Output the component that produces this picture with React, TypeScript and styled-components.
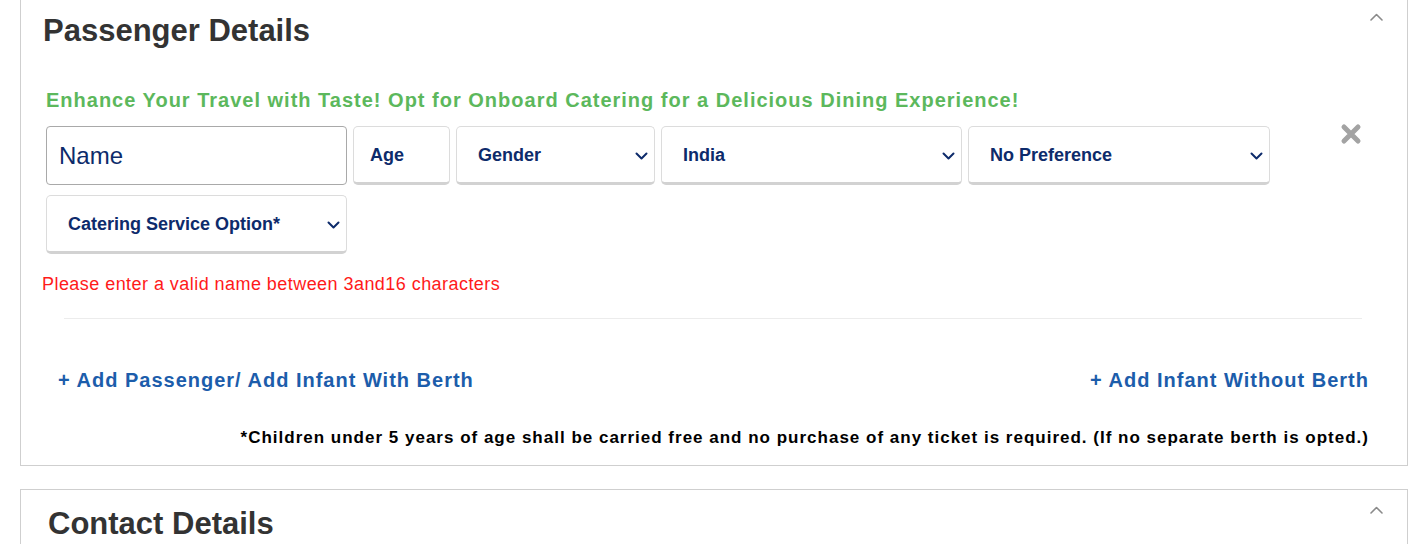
import styled, { createGlobalStyle } from "styled-components";

const GlobalStyle = createGlobalStyle`
  body {
    margin: 0;
    background: #fff;
    font-family: "Liberation Sans", Arial, sans-serif;
  }
`;

const Page = styled.div`
  padding: 0 3px 0 20px;
`;

const Panel = styled.section<{ $first?: boolean }>`
  border: 1px solid #cfcfcf;
  background: #fff;
  margin-top: ${(p) => (p.$first ? "-4px" : "23px")};
  padding: 0 0 17px 0;
`;

const PanelHeader = styled.div`
  display: flex;
  align-items: flex-start;
  justify-content: space-between;
  padding: 16px 24px 0 22px;
`;

const Title = styled.h2<{ $indent?: number }>`
  margin: 0;
  padding-left: ${(p) => p.$indent || 0}px;
  font-size: 31px;
  line-height: 36px;
  font-weight: bold;
  color: #333;
`;

const CollapseToggle = styled.div`
  line-height: 0;
  cursor: pointer;
`;

const Body = styled.div`
  padding: 39px 0 0 25px;
`;

const Promo = styled.p`
  margin: 0;
  font-size: 20px;
  line-height: 24px;
  font-weight: bold;
  color: #5cb85c;
  letter-spacing: 1px;
`;

const PassengerRow = styled.div`
  display: flex;
  align-items: flex-start;
  margin-top: 14px;
`;

const Fields = styled.div`
  display: flex;
  flex-wrap: wrap;
  gap: 10px 6px;
  width: 1224px;
`;

const NameInput = styled.input`
  box-sizing: border-box;
  width: 301px;
  height: 59px;
  padding: 0 12px;
  border: 1px solid #a9a9a9;
  border-radius: 4px;
  font-family: "Liberation Sans", Arial, sans-serif;
  font-size: 24px;
  color: #0d2b6b;
  outline: none;

  &::placeholder {
    color: #0d2b6b;
  }
`;

const SelectBox = styled.div<{ $w: number; $pad: number }>`
  box-sizing: border-box;
  width: ${(p) => p.$w}px;
  height: 59px;
  display: flex;
  align-items: center;
  justify-content: space-between;
  padding: 2px 6px 0 ${(p) => p.$pad}px;
  border: 1px solid #dcdcdc;
  border-bottom: 3px solid #d2d2d2;
  border-radius: 5px;
  font-size: 18px;
  font-weight: bold;
  color: #0d2b6b;
`;

const RemoveButton = styled.button`
  margin: -3px 0 0 70px;
  padding: 0;
  border: 0;
  background: none;
  cursor: pointer;
  line-height: 0;
`;

const ErrorText = styled.p`
  margin: 19px 0 0 -4px;
  font-size: 18px;
  line-height: 22px;
  color: #ff1a1a;
  letter-spacing: 0.45px;
`;

const Divider = styled.hr`
  margin: 23px 45px 0 43px;
  border: 0;
  border-top: 1px solid #ececec;
`;

const LinksRow = styled.div`
  display: flex;
  justify-content: space-between;
  margin: 49px 38px 0 37px;
`;

const AddLink = styled.a`
  font-size: 20px;
  line-height: 24px;
  font-weight: bold;
  color: #1c5dab;
  text-decoration: none;
  letter-spacing: 1px;
  cursor: pointer;
`;

const Footnote = styled.p`
  margin: 36px 38px 0 0;
  text-align: right;
  font-size: 17px;
  line-height: 20px;
  font-weight: bold;
  color: #000;
  letter-spacing: 1px;
`;

const Chevron = ({ up }: { up?: boolean }) => (
  <svg width="13" height="8" viewBox="0 0 13 8" fill="none">
    <path
      d={up ? "M1 7 L6.5 1.5 L12 7" : "M1.5 1.5 L6.5 6.5 L11.5 1.5"}
      stroke={up ? "#8a8a8a" : "#0d2b6b"}
      strokeWidth={up ? 1.6 : 2}
      strokeLinecap="round"
      strokeLinejoin="round"
    />
  </svg>
);

const CloseIcon = () => (
  <svg width="22" height="22" viewBox="0 0 22 22">
    <path
      d="M4 4 L18 18 M18 4 L4 18"
      stroke="#a3a3a3"
      strokeWidth="5"
      strokeLinecap="round"
    />
  </svg>
);

const selects = [
  { label: "Age", w: 97, pad: 16, arrow: false },
  { label: "Gender", w: 199, pad: 21, arrow: true },
  { label: "India", w: 301, pad: 21, arrow: true },
  { label: "No Preference", w: 302, pad: 21, arrow: true },
  { label: "Catering Service Option*", w: 301, pad: 21, arrow: true },
];

const App = () => {
  return (
    <Page>
      <GlobalStyle />
      <Panel $first>
        <PanelHeader>
          <Title>Passenger Details</Title>
          <CollapseToggle>
            <Chevron up />
          </CollapseToggle>
        </PanelHeader>
        <Body>
          <Promo>
            Enhance Your Travel with Taste! Opt for Onboard Catering for a
            Delicious Dining Experience!
          </Promo>
          <PassengerRow>
            <Fields>
              <NameInput placeholder="Name" />
              {selects.map((s) => (
                <SelectBox key={s.label} $w={s.w} $pad={s.pad}>
                  <span>{s.label}</span>
                  {s.arrow && <Chevron />}
                </SelectBox>
              ))}
            </Fields>
            <RemoveButton aria-label="Remove passenger">
              <CloseIcon />
            </RemoveButton>
          </PassengerRow>
          <ErrorText>Please enter a valid name between 3and16 characters</ErrorText>
        </Body>
        <Divider />
        <LinksRow>
          <AddLink>+ Add Passenger/ Add Infant With Berth</AddLink>
          <AddLink>+ Add Infant Without Berth</AddLink>
        </LinksRow>
        <Footnote>
          *Children under 5 years of age shall be carried free and no purchase
          of any ticket is required. (If no separate berth is opted.)
        </Footnote>
      </Panel>
      <Panel>
        <PanelHeader>
          <Title $indent={5}>Contact Details</Title>
          <CollapseToggle>
            <Chevron up />
          </CollapseToggle>
        </PanelHeader>
        <Body />
      </Panel>
    </Page>
  );
};

export default App;
